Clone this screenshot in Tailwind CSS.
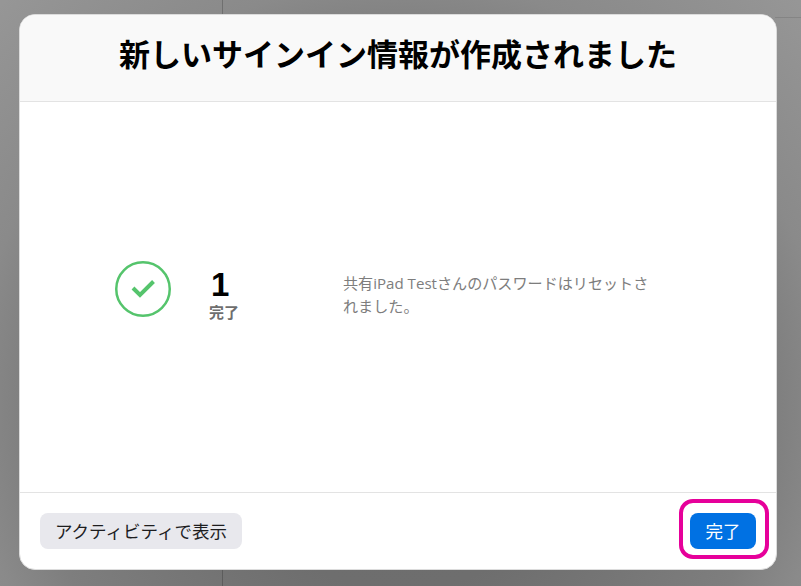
<!DOCTYPE html>
<html lang="ja">
<head>
  <meta charset="UTF-8" />
  <title>新しいサインイン情報</title>
  <script src="https://cdn.jsdelivr.net/npm/@tailwindcss/browser@4"></script>
</head>
<body class="h-[586px] w-[801px] overflow-hidden bg-[#7d7d7d] font-['Open_Sans','Noto_Sans_CJK_JP',sans-serif]">
  <div class="relative h-full w-full pt-[14px] pl-[19px] bg-[radial-gradient(circle_at_50%_70%,#6c6c6c_0px,#6e6e6e_180px,#7e7e7e_370px,#8a8a8a_430px,#969696_570px)]">
    <!-- 背景の区切り線 -->
    <div class="absolute left-[222px] top-0 h-full w-px bg-black/20"></div>
    <div class="absolute right-0 top-[17px] h-px w-[26px] bg-black/10"></div>

    <!-- モーダル -->
    <div class="relative flex h-[556px] w-[758px] flex-col overflow-hidden rounded-[16px] border border-[#dcdcdc] bg-white">
      <div class="flex h-[87px] shrink-0 items-center justify-center border-b border-[#e3e3e3] bg-[#f9f9f9] pb-[7px]">
        <h1 class="text-[31px] font-bold text-black">新しいサインイン情報が作成されました</h1>
      </div>

      <div class="flex flex-1 items-center pl-[95px]">
        <div class="mb-[16px] flex h-[56px] w-[56px] shrink-0 items-center justify-center">
          <svg width="56" height="56" viewBox="0 0 56 56" fill="none">
            <circle cx="28" cy="28" r="26.75" stroke="#55c46c" stroke-width="2.5" />
            <path d="M18 27l7 7 13.5-13.5" stroke="#55c46c" stroke-width="4" />
          </svg>
        </div>
        <div class="mb-[8px] ml-[38px] flex w-[30px] flex-col">
          <span class="block pt-[3px] pl-[2px] font-['Liberation_Sans'] text-[33px] leading-[36px] font-bold text-black">1</span>
          <span class="block text-[15px] leading-[19px] font-bold text-[#6e6e6e]">完了</span>
        </div>
        <p class="mb-[4px] ml-[104px] w-[310px] text-[15.1px] leading-[23px] text-[#7d7d7d]">共有iPad Testさんのパスワードはリセットされました。</p>
      </div>

      <div class="flex h-[77px] shrink-0 items-start justify-between border-t border-[#e3e3e3] pt-5 pr-[20px] pl-[20px]">
        <button class="h-9 w-[202px] rounded-lg bg-[#e8e8ed] text-[17.5px] text-[#1d1d1f]">アクティビティで表示</button>
        <button class="h-9 w-[66px] rounded-lg bg-[#0071e3] text-[17.5px] text-white">完了</button>
      </div>
    </div>

    <!-- 強調枠 -->
    <div class="absolute left-[679px] top-[499px] h-[60px] w-[90px] rounded-[14px] border-4 border-[#e6009a]"></div>
  </div>
</body>
</html>
